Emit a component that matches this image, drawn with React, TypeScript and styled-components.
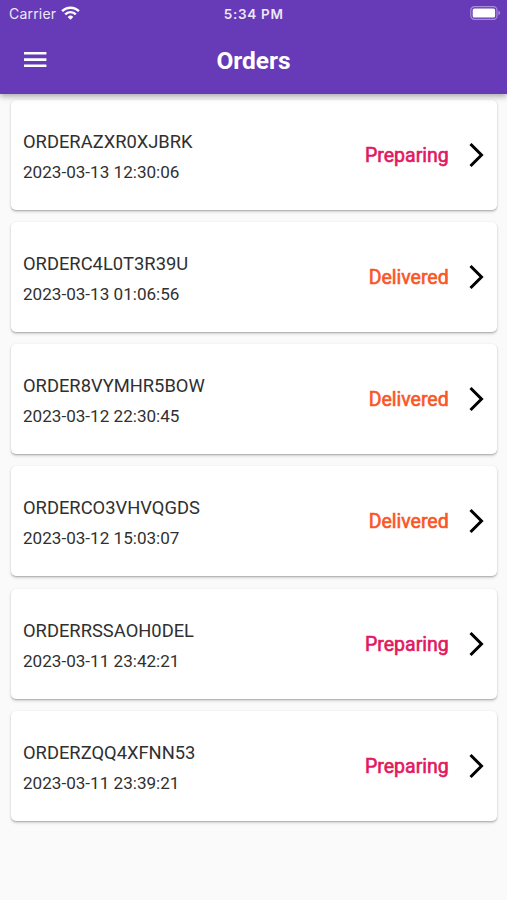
import React from "react";
import styled, { createGlobalStyle } from "styled-components";

type Status = "Preparing" | "Delivered";

interface Order {
  id: string;
  placedAt: string;
  status: Status;
}

const orders: Order[] = [
  { id: "ORDERAZXR0XJBRK", placedAt: "2023-03-13 12:30:06", status: "Preparing" },
  { id: "ORDERC4L0T3R39U", placedAt: "2023-03-13 01:06:56", status: "Delivered" },
  { id: "ORDER8VYMHR5BOW", placedAt: "2023-03-12 22:30:45", status: "Delivered" },
  { id: "ORDERCO3VHVQGDS", placedAt: "2023-03-12 15:03:07", status: "Delivered" },
  { id: "ORDERRSSAOH0DEL", placedAt: "2023-03-11 23:42:21", status: "Preparing" },
  { id: "ORDERZQQ4XFNN53", placedAt: "2023-03-11 23:39:21", status: "Preparing" },
];

const statusColors: Record<Status, string> = {
  Preparing: "#e2195f",
  Delivered: "#fb5624",
};

const GlobalStyle = createGlobalStyle`
  * { box-sizing: border-box; }
  body { margin: 0; background: #fafafa; }
`;

const Screen = styled.div`
  display: flex;
  flex-direction: column;
  height: 100vh;
  overflow: hidden;
  background: #fafafa;
  font-family: Roboto, sans-serif;
`;

const Header = styled.header`
  position: relative;
  z-index: 1;
  flex: none;
  height: 93.6px;
  background: #673ab7;
  color: #fff;
  box-shadow: 0 2px 5px rgba(0, 0, 0, 0.2), 0 4px 6px rgba(0, 0, 0, 0.12);
`;

const StatusBar = styled.div`
  display: grid;
  grid-template-columns: 1fr auto 1fr;
  align-items: center;
  height: 25px;
  padding: 2px 6px 0 9px;
  font-family: Inter, sans-serif;
  font-size: 14px;
  line-height: 20px;
  color: #eee7f7;
`;

const Carrier = styled.div`
  display: flex;
  align-items: center;
  gap: 5px;
  letter-spacing: 0.2px;

  svg {
    margin-top: -2px;
  }
`;

const Clock = styled.div`
  margin-right: 2.5px;
  font-size: 13.5px;
  font-weight: 600;
  letter-spacing: 0.7px;
`;

const Battery = styled.svg`
  justify-self: end;
  margin-top: -1px;
`;

const AppBar = styled.div`
  display: grid;
  grid-template-columns: 1fr auto 1fr;
  align-items: center;
  height: 68px;
  padding: 0 24px 0 24px;
`;

const MenuButton = styled.button`
  display: flex;
  width: 23px;
  margin-top: 2px;
  padding: 0;
  border: 0;
  background: none;
`;

const Title = styled.h1`
  margin: 4px 0 0;
  font-size: 24.5px;
  line-height: 30px;
  font-weight: 700;
`;

const OrderList = styled.ul`
  display: flex;
  flex-direction: column;
  gap: 12.24px;
  margin: 0;
  padding: 6px 9.8px 0 10.6px;
  list-style: none;
`;

const Card = styled.li`
  display: flex;
  align-items: center;
  height: 110px;
  padding: 0 13px 0 12.4px;
  border-radius: 5px;
  background: #fff;
  box-shadow: 0 1px 1.5px rgba(0, 0, 0, 0.2), 0 1.2px 3px rgba(0, 0, 0, 0.14);
`;

const Details = styled.div`
  flex: 1;
  padding-top: 4px;
  color: #303030;
`;

const OrderId = styled.div`
  font-size: 18.35px;
  line-height: 31px;
`;

const PlacedAt = styled.div`
  font-size: 17.1px;
  line-height: 31px;
`;

const StatusLabel = styled.span<{ $status: Status }>`
  margin: 2px 20.5px 0 0;
  font-size: 19.5px;
  line-height: 24px;
  font-weight: 400;
  -webkit-text-stroke: 0.6px currentColor;
  color: ${({ $status }) => statusColors[$status]};
`;

const Chevron = styled.svg`
  flex: none;
`;

export default function App() {
  return (
    <Screen>
      <GlobalStyle />
      <Header>
        <StatusBar>
          <Carrier>
            Carrier
            <svg width="19" height="14" viewBox="0 0 19 14" fill="none" stroke="#fff" strokeWidth="2.4">
              <path d="M1.1 5.2a11.8 11.8 0 0 1 16.8 0" />
              <path d="M4.2 8.4a7.4 7.4 0 0 1 10.6 0" />
              <path d="M9.5 13.7 6.7 10.9a4 4 0 0 1 5.6 0z" fill="#fff" stroke="none" />
            </svg>
          </Carrier>
          <Clock>5:34 PM</Clock>
          <Battery width="31" height="14" viewBox="0 0 31 14">
            <rect x="0.8" y="0.7" width="26.2" height="12.6" rx="3.6" fill="none" stroke="#a98dd6" strokeWidth="1.2" />
            <rect x="2.7" y="2.5" width="22.4" height="9" rx="1.5" fill="#fff" />
            <path d="M28.4 4.8q1.8.6 1.8 2.2t-1.8 2.2z" fill="#a98dd6" />
          </Battery>
        </StatusBar>
        <AppBar>
          <MenuButton aria-label="Menu">
            <svg width="23" height="16" viewBox="0 0 23 16" fill="#fff">
              <path d="M0 0h22.4v2.6H0zM0 6.3h22.4v2.6H0zM0 12.5h22.4v2.6H0z" />
            </svg>
          </MenuButton>
          <Title>Orders</Title>
        </AppBar>
      </Header>
      <OrderList>
        {orders.map((order) => (
          <Card key={order.id}>
            <Details>
              <OrderId>{order.id}</OrderId>
              <PlacedAt>{order.placedAt}</PlacedAt>
            </Details>
            <StatusLabel $status={order.status}>{order.status}</StatusLabel>
            <Chevron width="15" height="26" viewBox="0 0 15 26" fill="none" stroke="#000" strokeWidth="3">
              <path d="m1.5 2 11 11-11 11" />
            </Chevron>
          </Card>
        ))}
      </OrderList>
    </Screen>
  );
}
